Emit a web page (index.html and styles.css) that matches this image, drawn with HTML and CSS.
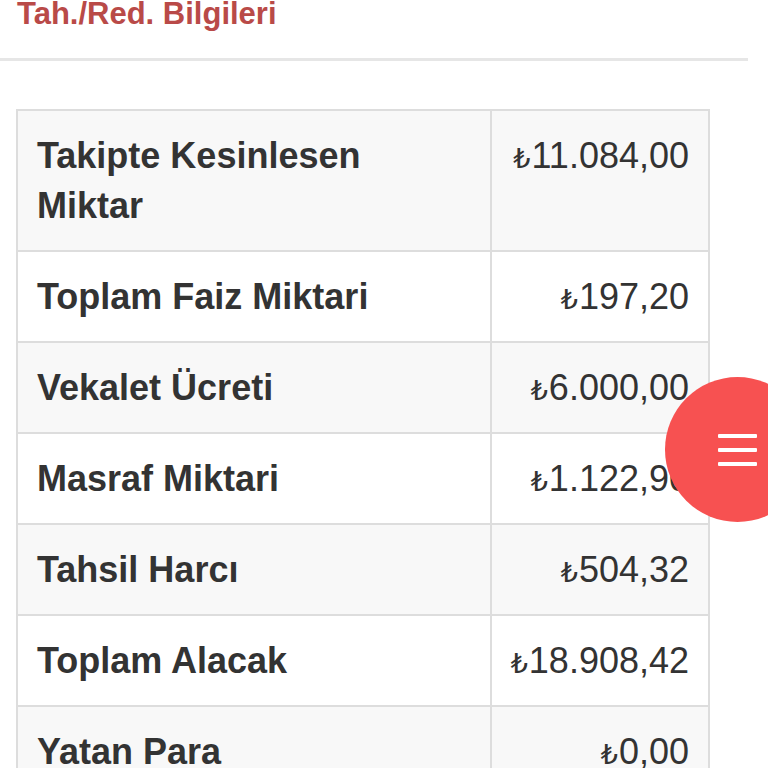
FILE: index.html
```html
<!DOCTYPE html>
<html lang="tr">
<head>
<meta charset="utf-8">
<link rel="stylesheet" href="styles.css">
</head>
<body>
<div class="page">
  <h3 class="title">Tah./Red. Bilgileri</h3>
  <div class="rule"></div>
  <div class="content">
    <table class="info">
      <tbody>
        <tr><th>Takipte Kesinlesen Miktar</th><td><span class="cur">₺</span>11.084,00</td></tr>
        <tr><th>Toplam Faiz Miktari</th><td><span class="cur">₺</span>197,20</td></tr>
        <tr><th>Vekalet Ücreti</th><td><span class="cur">₺</span>6.000,00</td></tr>
        <tr><th>Masraf Miktari</th><td><span class="cur">₺</span>1.122,90</td></tr>
        <tr><th>Tahsil Harcı</th><td><span class="cur">₺</span>504,32</td></tr>
        <tr><th>Toplam Alacak</th><td><span class="cur">₺</span>18.908,42</td></tr>
        <tr><th>Yatan Para</th><td><span class="cur">₺</span>0,00</td></tr>
        <tr><th>Kalan Borç</th><td><span class="cur">₺</span>18.908,42</td></tr>
      </tbody>
    </table>
  </div>
</div>
<button class="fab" aria-label="Menü">
  <span class="bar"></span><span class="bar"></span><span class="bar"></span>
</button>
</body>
</html>
```
FILE: styles.css
```css
html, body {
  margin: 0;
  padding: 0;
  background: #fff;
  font-family: "Liberation Sans", Arial, "DejaVu Sans", sans-serif;
  color: #333;
  overflow: hidden;
  height: 768px;
}
.page {
  width: 748px;
}
.title {
  margin: -5px 0 0 17px;
  font-size: 31px;
  line-height: 38px;
  font-weight: bold;
  color: #b94a48;
}
.rule {
  margin-top: 25px;
  height: 3px;
  background: #e6e6e6;
}
.content {
  padding: 48px 0 0 16px;
}
.info {
  width: 694px;
  border-collapse: collapse;
  font-size: 36px;
  line-height: 50px;
}
.info th, .info td {
  border: 2px solid #dddddd;
  padding: 20px 19px 19px 19px;
  vertical-align: top;
}
.info th {
  width: 434px;
  text-align: left;
  font-weight: bold;
  color: #333;
}
.info td {
  text-align: right;
  color: #333;
  white-space: nowrap;
}
.info .cur {
  font-family: "DejaVu Sans", sans-serif;
  font-size: 27px;
  line-height: 0;
  margin-right: 1px;
}
.info tr:nth-child(odd) {
  background: #f8f8f8;
}
.fab {
  position: fixed;
  left: 665px;
  top: 377px;
  width: 145px;
  height: 145px;
  border-radius: 50%;
  border: none;
  background: #f75151;
  padding: 0;
  display: flex;
  flex-direction: column;
  justify-content: center;
  align-items: flex-start;
  gap: 10px;
  padding-left: 53px;
  box-sizing: border-box;
}
.fab .bar {
  display: block;
  width: 39px;
  height: 4px;
  background: #fff;
  border-radius: 1px;
}
```
